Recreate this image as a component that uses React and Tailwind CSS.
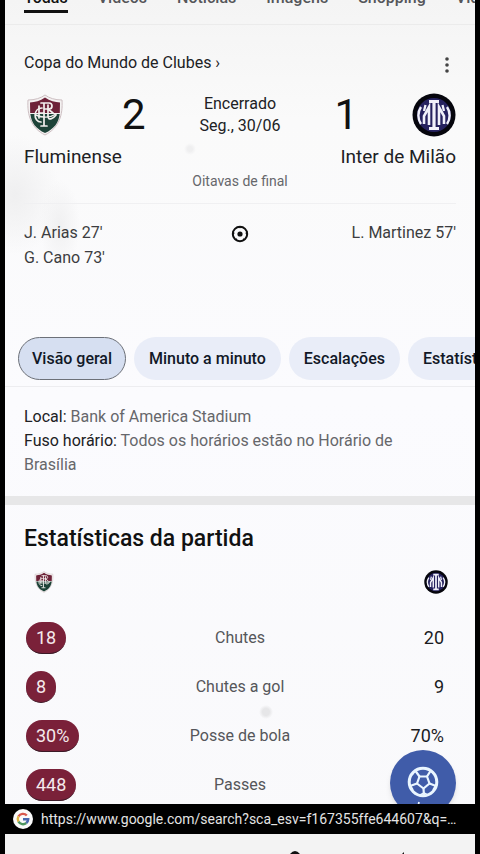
import React from "react";

const searchTabs = ["Todas", "Vídeos", "Notícias", "Imagens", "Shopping", "Vídeos curtos"];
const matchTabs = ["Visão geral", "Minuto a minuto", "Escalações", "Estatísticas"];

const stats = [
  { label: "Chutes", home: "18", away: "20" },
  { label: "Chutes a gol", home: "8", away: "9" },
  { label: "Posse de bola", home: "30%", away: "70%" },
  { label: "Passes", home: "448", away: "" },
];

function FluminenseCrest({ className }) {
  return (
    <svg viewBox="0 0 36 42" className={className} role="img" aria-label="Fluminense">
      <path d="M18 1C14 4 8 6 1 6C0 21 4 34 18 41C32 34 36 21 35 6C28 6 22 4 18 1Z" fill="#f4f1f1" stroke="#cdbfc2" strokeWidth="1" />
      <path d="M18 3.500C13 7 8 8 3 8.500L3.200 19H32.800L33 8.500C28 8 23 7 18 3.500Z" fill="#6d2238" />
      <path d="M3.300 20C4.500 29 9 35 18 39C27 35 31.500 29 32.700 20Z" fill="#1d4338" />
      <g fill="none" stroke="#f3f0ee" strokeWidth="1.700" strokeLinecap="round">
        <path d="M17 9V31M14 32H20M14 9H22C26 9 26 15 22 15H17M21 15L26 19" />
        <path d="M15 14C6 14 6 28 14 28" />
        <path d="M12 12V24M12 19H17M21 11V22C21 27 26 25 29 21" />
        <path d="M9 21C15 24 23 24 29 20" strokeWidth="1.400" />
      </g>
    </svg>
  );
}

function InterCrest({ className }) {
  return (
    <svg viewBox="0 0 44 44" className={className} role="img" aria-label="Inter de Milão">
      <circle cx="22" cy="22" r="21.500" fill="#06060d" />
      <circle cx="22" cy="22" r="17" fill="#26225f" />
      <g fill="none" stroke="#f1f1fa" strokeWidth="3.200">
        <path d="M22 8V36M17 8.500H27M17 35.500H27" />
        <path d="M17 32V14L12 23V31M27 32V14L32 23V31" strokeWidth="2.600" />
        <path d="M13.500 12L12 18M30.500 12L32 18" strokeWidth="2.300" />
        <path d="M9 14C5.500 19 5.500 26 9 31M35 14C38.500 19 38.500 26 35 31" strokeWidth="2.400" />
      </g>
    </svg>
  );
}

function GoalIcon() {
  return (
    <svg viewBox="0 0 18 18" className="size-[18px]" role="img" aria-label="Gols">
      <circle cx="9" cy="9" r="7.200" fill="none" stroke="#111" strokeWidth="2" />
      <circle cx="9" cy="9" r="2.600" fill="#111" />
      <path d="M7 1H11L9 3.500ZM1.500 6L3.700 8L1.500 11ZM16.500 6L14.300 8L16.500 11ZM4 15L5 12.700L7.500 16.500ZM14 15L13 12.700L10.500 16.500Z" fill="#111" />
    </svg>
  );
}

function BallIcon() {
  return (
    <svg viewBox="0 0 32 46" className="h-[46px] w-8" fill="none" stroke="#eaf6ff" strokeWidth="2.200" strokeLinejoin="round">
      <circle cx="16" cy="16" r="13.800" strokeWidth="3" />
      <path d="M12.500 10.500H20L22.500 17.500L16.500 22.500L10 17.500Z" />
      <path d="M12.500 10.500L8.500 5M20 10.500L23.500 5M22.500 17.500L29 20M16.500 22.500L17 30M10 17.500L3 20" />
      <path d="M8 5L5 9M24 5L28 9M3 19L6 24M29 19L26 24M13 29L17 27L21 29" strokeWidth="1.600" />
      <path d="M12 36L10 46" strokeWidth="1.800" />
    </svg>
  );
}

function GoogleIcon() {
  return (
    <svg viewBox="0 0 20 20" className="size-5 shrink-0" role="img" aria-label="Google">
      <circle cx="10" cy="10" r="10" fill="#fafafa" />
      <g fill="none" strokeWidth="2.400">
        <path d="M13.800 6.500A5.200 5.200 0 0 0 5.500 7.400" stroke="#d8594e" />
        <path d="M5.500 7.400A5.200 5.200 0 0 0 5.500 12.600" stroke="#dfb445" />
        <path d="M5.500 12.600A5.200 5.200 0 0 0 13.300 14" stroke="#4d9660" />
        <path d="M13.300 14A5.200 5.200 0 0 0 15.200 10.300H10" stroke="#4868b0" />
      </g>
    </svg>
  );
}

function StatRow({ label, home, away }) {
  return (
    <tr className="grid h-8 grid-cols-3 items-center">
      <td className="justify-self-start rounded-full border-b border-[#3c1a27] bg-[#7a2139] px-[10px] text-lg leading-[31px] text-[#f5e9ec]">
        {home}
      </td>
      <th scope="row" className="text-center text-base font-normal whitespace-nowrap text-[#55565a]">
        {label}
      </th>
      <td className="pr-[10px] text-right text-lg text-[#1b1c1f]">{away}</td>
    </tr>
  );
}

function App() {
  return (
    <div className="min-h-screen bg-black px-[5px] font-[Roboto,'Liberation_Sans',sans-serif] text-[#202124]">
      <div className="bg-[radial-gradient(ellipse_20px_45px_at_55px_225px,#f0f0f1,transparent),radial-gradient(ellipse_45px_60px_at_10px_195px,#efeff0,transparent),radial-gradient(circle_7px_at_261px_712px,#e6e6e8_50%,transparent),radial-gradient(circle_6px_at_185px_149px,#efeff0_40%,transparent),linear-gradient(#f4f4f4,#fafafa_120px,#fbfbfe_400px,#f9f9fb)]">
        <nav className="flex h-[25px] items-end gap-[30px] overflow-hidden border-b border-[#ebebeb] px-[19px] pb-[11px]">
          {searchTabs.map((tab, i) => (
            <a
              key={tab}
              href="#"
              className={
                i === 0
                  ? "shrink-0 border-b-3 border-[#111] pb-[2px] text-base leading-5 font-medium text-[#111]"
                  : "shrink-0 border-b-3 border-transparent pb-[2px] text-base leading-5 font-medium whitespace-nowrap text-[#55565a]"
              }
            >
              {tab}
            </a>
          ))}
        </nav>

        <section className="px-[19px] pt-6">
          <div className="flex items-center justify-between">
            <a href="#" className="text-base leading-7">
              Copa do Mundo de Clubes ›
            </a>
            <button type="button" aria-label="Mais opções" className="flex w-[18px] justify-center pt-1">
              <svg viewBox="0 0 4 16" className="h-4 w-1" fill="#444">
                <circle cx="2" cy="2" r="1.800" />
                <circle cx="2" cy="8" r="1.800" />
                <circle cx="2" cy="14" r="1.800" />
              </svg>
            </button>
          </div>

          <div className="grid grid-cols-[44px_1fr_auto_1fr_44px] items-center pt-4">
            <FluminenseCrest className="ml-[2px] h-[42px] w-[38px]" />
            <span className="text-center text-[42px] leading-[44px] text-[#111]">2</span>
            <p className="text-center text-base leading-[22px]">
              Encerrado
              <br />
              Seg., 30/06
            </p>
            <span className="text-center text-[42px] leading-[44px] text-[#111]">1</span>
            <InterCrest className="size-[44px]" />
          </div>

          <div className="flex justify-between pt-2 text-[19px] leading-6">
            <h2>Fluminense</h2>
            <h2>Inter de Milão</h2>
          </div>
          <p className="border-b border-[#f0f0f2] pt-[2px] pb-3 text-center text-sm leading-5 text-[#66676b]">
            Oitavas de final
          </p>

          <div className="grid grid-cols-[1fr_auto_1fr] items-start pt-4 pb-[67px] text-base leading-[25px] text-[#3c3d40]">
            <p>
              J. Arias 27'
              <br />
              G. Cano 73'
            </p>
            <div className="pt-[5px]">
              <GoalIcon />
            </div>
            <p className="text-right">L. Martinez 57'</p>
          </div>
        </section>

        <div className="flex gap-2 overflow-hidden border-b border-[#ededf0] pb-[6px] pl-[13px]">
          {matchTabs.map((tab, i) => (
            <button
              key={tab}
              type="button"
              className={
                i === 0
                  ? "h-[43px] shrink-0 rounded-full border border-[#6c7078] bg-[#d6dff1] px-[13px] text-base font-medium text-[#111827]"
                  : "h-[43px] shrink-0 rounded-full border border-transparent bg-[#e9edf8] px-[14px] text-base font-medium text-[#111827]"
              }
            >
              {tab}
            </button>
          ))}
        </div>

        <section className="border-b-9 border-[#e7e7e8] pt-[18px] pr-[50px] pb-[19px] pl-[19px] text-base leading-6 text-[#66676b]">
          <p>
            <span className="text-[#202124]">Local:</span> Bank of America Stadium
          </p>
          <p>
            <span className="text-[#202124]">Fuso horário:</span> Todos os horários estão no Horário de Brasília
          </p>
        </section>

        <section className="relative overflow-hidden px-[19px] pt-4 pb-[3px]">
          <h2 className="text-[23px] leading-9 font-medium text-[#111]">Estatísticas da partida</h2>
          <div className="flex items-center justify-between pt-[13px] pr-2 pb-7 pl-[10px]">
            <FluminenseCrest className="h-[22px] w-5" />
            <InterCrest className="size-6" />
          </div>
          <table className="block px-[2px]">
            <tbody className="grid gap-[17px]">
              {stats.map((row) => (
                <StatRow key={row.label} {...row} />
              ))}
            </tbody>
          </table>
          <button
            type="button"
            aria-label="Acompanhar partida"
            className="absolute right-[19px] -bottom-3 flex size-[66px] justify-center rounded-full bg-[#405ca9] pt-4 shadow-md"
          >
            <BallIcon />
          </button>
        </section>

        <div className="flex h-[30px] items-center gap-2 bg-black px-2 text-sm text-[#e4e4e4]">
          <GoogleIcon />
          <span className="truncate">https://www.google.com/search?sca_esv=f167355ffe644607&q=…</span>
        </div>
        <div className="flex h-5 items-end justify-end bg-[#f3f3f3] pr-[69px]">
          <svg viewBox="0 0 120 4" className="h-1 w-[120px]" fill="#111">
            <path d="M4 4Q9 -2 14 4ZM116 4L118 2V4Z" />
          </svg>
        </div>
      </div>
    </div>
  );
}

export default App;
